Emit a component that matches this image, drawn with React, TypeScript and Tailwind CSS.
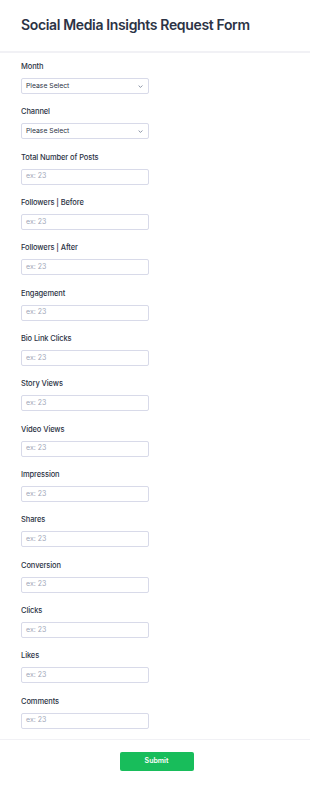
import React from "react";

const fields = [
  "Total Number of Posts",
  "Followers | Before",
  "Followers | After",
  "Engagement",
  "Bio Link Clicks",
  "Story Views",
  "Video Views",
  "Impression",
  "Shares",
  "Conversion",
  "Clicks",
  "Likes",
  "Comments",
];

function Label({ text }: { text: string }) {
  return (
    <div className="h-[10px] text-[7.5px] leading-[10px] font-medium tracking-[-0.1px] text-[#2c3345]">{text}</div>
  );
}

function SelectField({ label }: { label: string }) {
  return (
    <div className="h-[45.33px] pt-[2px]">
      <Label text={label} />
      <div className="mt-[6px] flex h-[16px] w-[128px] items-center justify-between rounded-[2px] border border-[#d8dae9] bg-white pl-[4px] pr-[5px]">
        <span className="text-[6.8px] leading-[10px] text-[#2c3345]">Please Select</span>
        <svg width="5" height="3" viewBox="0 0 5 3" fill="none">
          <path d="M0.6 0.5 L2.5 2.4 L4.4 0.5" stroke="#6f7a90" strokeWidth="0.8" />
        </svg>
      </div>
    </div>
  );
}

function InputField({ label }: { label: string }) {
  return (
    <div className="h-[45.33px] pt-[2px]">
      <Label text={label} />
      <div className="mt-[6px] flex h-[16px] w-[128px] items-center rounded-[2px] border border-[#d8dae9] bg-white pl-[4px]">
        <span className="text-[7px] text-[#a0a6b8]">ex: 23</span>
      </div>
    </div>
  );
}

export default function App() {
  return (
    <div className="w-[310px] h-[788px] bg-white" style={{ fontFamily: "Inter, 'Noto Sans', sans-serif" }}>
      <div className="h-[51px] px-[21px] pt-[14px]">
        <h1 className="text-[14px] leading-[22px] font-semibold text-[#2c3345] tracking-[-0.35px]">
          Social Media Insights Request Form
        </h1>
      </div>
      <div className="h-[2px] bg-[#f1f1f5]" />
      <div className="px-[21px] pt-[7px]">
        <SelectField label="Month" />
        <SelectField label="Channel" />
        {fields.map((f) => (
          <InputField key={f} label={f} />
        ))}
      </div>
      <div className="mt-[-1px] h-px bg-[#f1f1f5]" />
      <div className="flex justify-center pl-[3px] pt-[12px]">
        <button className="h-[19px] w-[74px] rounded-[2px] bg-[#18bd5b] text-[7px] font-semibold text-white">
          Submit
        </button>
      </div>
    </div>
  );
}
